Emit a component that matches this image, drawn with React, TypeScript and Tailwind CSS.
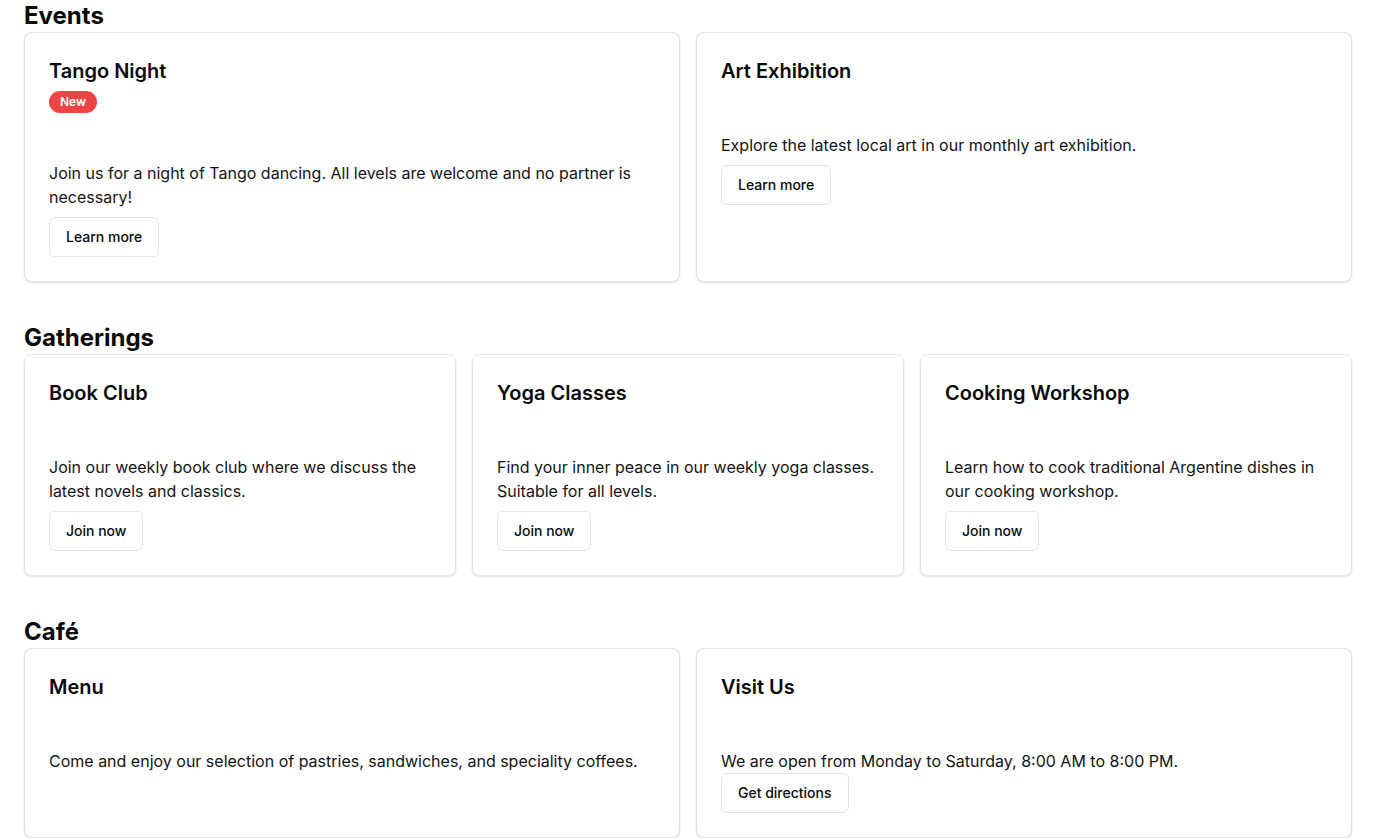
import React from "react";

type Item = { title: string; badge?: string; desc: string; action?: string; tight?: boolean };

const sections: { name: string; three?: boolean; items: Item[] }[] = [
  {
    name: "Events",
    items: [
      {
        title: "Tango Night",
        badge: "New",
        desc: "Join us for a night of Tango dancing. All levels are welcome and no partner is necessary!",
        action: "Learn more",
      },
      {
        title: "Art Exhibition",
        desc: "Explore the latest local art in our monthly art exhibition.",
        action: "Learn more",
      },
    ],
  },
  {
    name: "Gatherings",
    three: true,
    items: [
      {
        title: "Book Club",
        desc: "Join our weekly book club where we discuss the latest novels and classics.",
        action: "Join now",
      },
      {
        title: "Yoga Classes",
        desc: "Find your inner peace in our weekly yoga classes. Suitable for all levels.",
        action: "Join now",
      },
      {
        title: "Cooking Workshop",
        desc: "Learn how to cook traditional Argentine dishes in our cooking workshop.",
        action: "Join now",
      },
    ],
  },
  {
    name: "Café",
    items: [
      {
        title: "Menu",
        desc: "Come and enjoy our selection of pastries, sandwiches, and speciality coffees.",
      },
      {
        title: "Visit Us",
        desc: "We are open from Monday to Saturday, 8:00 AM to 8:00 PM.",
        action: "Get directions",
        tight: true,
      },
    ],
  },
];

function Card({ item }: { item: Item }) {
  return (
    <div className="rounded-lg border border-[#e4e4e7] bg-white text-[#09090b] shadow-sm">
      <div className="flex flex-col gap-1.5 p-6">
        <h3 className="text-xl font-semibold leading-7">{item.title}</h3>
        {item.badge && (
          <div className="flex">
            <span className="inline-flex items-center rounded-full border border-transparent bg-[#ef4444] px-2.5 py-0.5 text-xs font-semibold leading-4 text-white">
              {item.badge}
            </span>
          </div>
        )}
      </div>
      <div className="p-6">
        <p className="text-base leading-6 text-[#141416]">{item.desc}</p>
        {item.action && (
          <button
            className={
              item.tight
                ? "inline-flex h-10 items-center justify-center rounded-md border border-[#e4e4e7] bg-white px-4 text-sm font-medium text-[#09090b]"
                : "mt-2 inline-flex h-10 items-center justify-center rounded-md border border-[#e4e4e7] bg-white px-4 text-sm font-medium text-[#09090b]"
            }
          >
            {item.action}
          </button>
        )}
      </div>
    </div>
  );
}

export default function App() {
  return (
    <div
      className="min-h-screen bg-white px-6 text-[#09090b]"
      style={{ fontFamily: "Inter, 'Noto Sans', sans-serif" }}
    >
      <div className="flex flex-col gap-10">
        {sections.map((s) => (
          <section key={s.name}>
            <h2 className="text-2xl font-bold leading-8">{s.name}</h2>
            <div className={s.three ? "grid grid-cols-3 gap-4" : "grid grid-cols-2 gap-4"}>
              {s.items.map((it) => (
                <Card key={it.title} item={it} />
              ))}
            </div>
          </section>
        ))}
      </div>
    </div>
  );
}
